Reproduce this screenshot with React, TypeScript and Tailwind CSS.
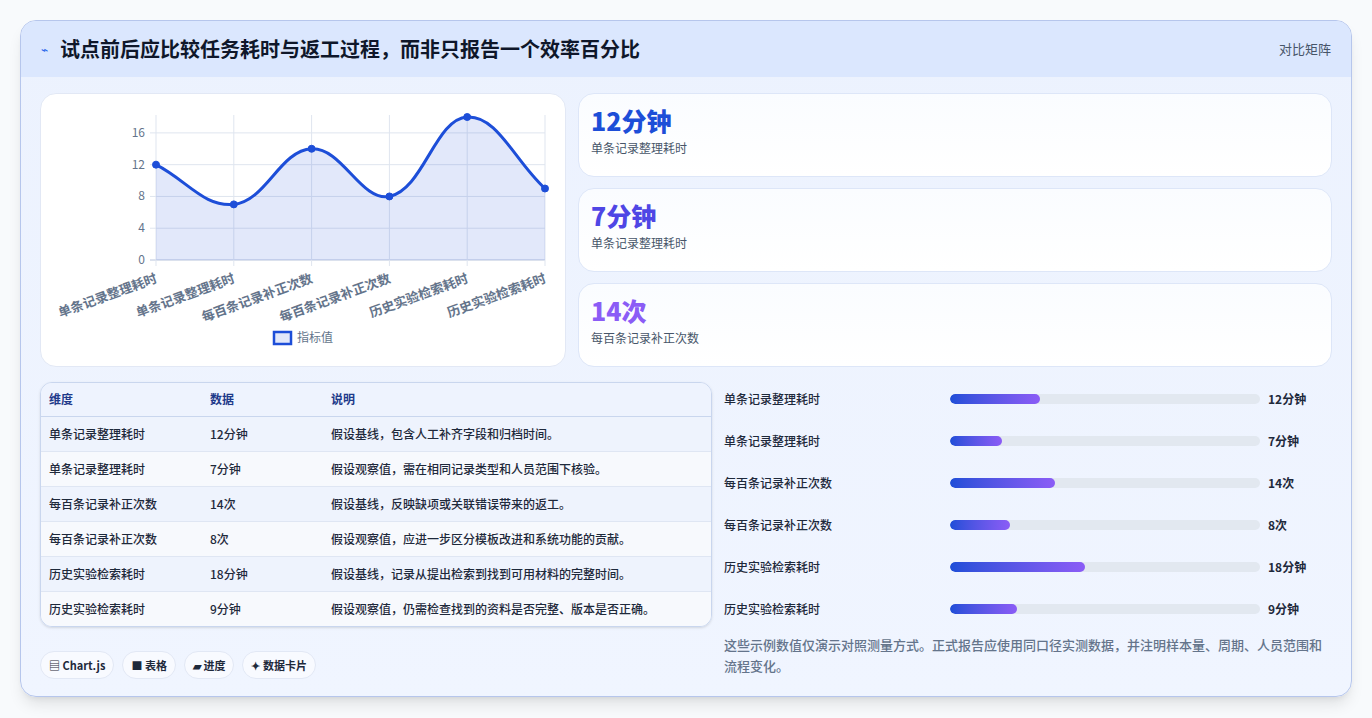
const labels = ['单条记录整理耗时', '单条记录整理耗时', '每百条记录补正次数', '每百条记录补正次数', '历史实验检索耗时', '历史实验检索耗时'];
const values = [12, 7, 14, 8, 18, 9];
const display = ['12分钟', '7分钟', '14次', '8次', '18分钟', '9分钟'];
const notes = [
  '假设基线，包含人工补齐字段和归档时间。',
  '假设观察值，需在相同记录类型和人员范围下核验。',
  '假设基线，反映缺项或关联错误带来的返工。',
  '假设观察值，应进一步区分模板改进和系统功能的贡献。',
  '假设基线，记录从提出检索到找到可用材料的完整时间。',
  '假设观察值，仍需检查找到的资料是否完整、版本是否正确。',
];

const font = { fontFamily: '"Noto Sans CJK SC", "Noto Sans", sans-serif' };

function LineChart() {
  const x0 = 115, x1 = 504, y0 = 166, yTop = 23;
  const sy = (v: number) => y0 - (v / 18) * (y0 - yTop);
  const pts = values.map((v, i) => ({ x: x0 + (i * (x1 - x0)) / 5, y: sy(v) }));
  const t = 0.4;
  const cps = pts.map((p, i) => {
    const prev = pts[i - 1] || p;
    const next = pts[i + 1] || p;
    const d01 = Math.hypot(p.x - prev.x, p.y - prev.y);
    const d12 = Math.hypot(next.x - p.x, next.y - p.y);
    const s = d01 + d12 || 1;
    const fa = (t * d01) / s, fb = (t * d12) / s;
    return {
      px: p.x - fa * (next.x - prev.x), py: p.y - fa * (next.y - prev.y),
      nx: p.x + fb * (next.x - prev.x), ny: p.y + fb * (next.y - prev.y),
    };
  });
  let d = `M${pts[0].x},${pts[0].y}`;
  for (let i = 1; i < pts.length; i++) {
    d += ` C${cps[i - 1].nx},${cps[i - 1].ny} ${cps[i].px},${cps[i].py} ${pts[i].x},${pts[i].y}`;
  }
  const area = `${d} L${x1},${y0} L${x0},${y0} Z`;
  return (
    <svg width="525" height="273" viewBox="0 0 525 273" style={font}>
      {[0, 4, 8, 12, 16].map((v) => (
        <g key={v}>
          <line x1={x0 - 6} x2={x1} y1={sy(v)} y2={sy(v)} stroke={v === 0 ? '#b8c4dc' : '#dfe5ef'} />
          <text x={x0 - 11} y={sy(v) + 4} textAnchor="end" fontSize="12" fill="#64748b">{v}</text>
        </g>
      ))}
      {pts.map((p, i) => (
        <line key={i} x1={p.x} x2={p.x} y1={yTop - 2} y2={y0 + 6} stroke="#dfe5ef" />
      ))}
      <path d={area} fill="rgba(29,78,216,0.13)" />
      <path d={d} fill="none" stroke="#1d4ed8" strokeWidth="3" />
      {pts.map((p, i) => (
        <circle key={i} cx={p.x} cy={p.y} r="3.5" fill="#1d4ed8" stroke="#1d4ed8" />
      ))}
      {pts.map((p, i) => (
        <text key={i} x={p.x + 2} y={y0 + 22} textAnchor="end" fontSize="13" fontWeight="600" fill="#64748b" transform={`rotate(-20 ${p.x + 2} ${y0 + 22})`}>
          {labels[i]}
        </text>
      ))}
      <rect x="233" y="238" width="17" height="12" fill="rgba(29,78,216,0.13)" stroke="#1d4ed8" strokeWidth="2.5" />
      <text x="256" y="248" fontSize="12" fill="#64748b">指标值</text>
    </svg>
  );
}

const stats = [
  { v: '12分钟', l: '单条记录整理耗时', c: 'text-[#1d4ed8]' },
  { v: '7分钟', l: '单条记录整理耗时', c: 'text-[#4f46e5]' },
  { v: '14次', l: '每百条记录补正次数', c: 'text-[#8b5cf6]' },
];

export default function App() {
  return (
    <div className="min-h-screen bg-[#f8fafc] pt-5 px-5" style={font}>
      <div className="rounded-2xl border border-[#b6c6ec] bg-gradient-to-b from-[#ecf2fe] to-[#f0f5ff] overflow-hidden shadow-lg h-[677px]">
        <div className="h-14 bg-[#dbe7fe] flex items-center justify-between px-5">
          <div className="flex items-center gap-3">
            <span className="text-[#2563eb] text-xs">⌁</span>
            <span className="text-[20px] font-bold text-[#0f172a]">试点前后应比较任务耗时与返工过程，而非只报告一个效率百分比</span>
          </div>
          <span className="text-[13px] text-[#475569]">对比矩阵</span>
        </div>
        <div className="px-[19px] pt-4">
          <div className="flex gap-[12px]">
            <div className="w-[526px] h-[274px] bg-white rounded-2xl border border-[#e2e8f5]">
              <LineChart />
            </div>
            <div className="flex-1 flex flex-col gap-[11px]">
              {stats.map((s, i) => (
                <div key={i} className="h-[84px] bg-gradient-to-b from-[#fafcff] to-white rounded-2xl border border-[#dde6f8] px-3 pt-2.5">
                  <div className={`text-[25px] font-black leading-8 ${s.c}`}>{s.v}</div>
                  <div className="text-xs text-[#475569] mt-1">{s.l}</div>
                </div>
              ))}
            </div>
          </div>
          <div className="flex gap-3 mt-[15px]">
            <div className="w-[672px]">
              <div className="rounded-xl border border-[#c9d6ee] overflow-hidden shadow-sm">
                <table className="w-full text-xs">
                  <thead>
                    <tr className="h-[33px] bg-[#eef3fe] border-b border-[#c9d6ee] text-[#1e3a8a] font-semibold text-left">
                      <th className="pl-2 w-[169px] font-semibold">维度</th>
                      <th className="w-[121px] font-semibold">数据</th>
                      <th className="font-semibold">说明</th>
                    </tr>
                  </thead>
                  <tbody className="text-[#1e293b] font-medium">
                    {labels.map((l, i) => (
                      <tr key={i} className={`h-[35px] ${i < 5 ? 'border-b border-[#dfe6f3]' : ''} ${i % 2 === 0 ? 'bg-[#eef3fd]' : 'bg-[#f7f9fd]'}`}>
                        <td className="pl-2">{l}</td>
                        <td>{display[i]}</td>
                        <td>{notes[i]}</td>
                      </tr>
                    ))}
                  </tbody>
                </table>
              </div>
              <div className="flex gap-2 mt-6">
                {['▤ Chart.js', '■ 表格', '▰ 进度', '✦ 数据卡片'].map((p) => (
                  <span key={p} className="h-[28px] px-2 rounded-full bg-[#f8faff] border border-[#e2e8f5] text-[11px] font-semibold text-[#1e293b] flex items-center">{p}</span>
                ))}
              </div>
            </div>
            <div className="flex-1 -mt-1">
              <div className="flex flex-col">
                {labels.map((l, i) => (
                  <div key={i} className="h-[42px] flex items-center">
                    <span className="w-[226px] text-xs font-medium text-[#1e293b]">{l}</span>
                    <div className="w-[310px] h-[10px] rounded-full bg-[#e2e8f0] overflow-hidden">
                      <div className="h-full rounded-full bg-gradient-to-r from-[#1d4ed8] to-[#8b5cf6]" style={{ width: `${(values[i] / 18) * 43.5}%` }} />
                    </div>
                    <span className="ml-2 text-xs font-bold text-[#1e293b]">{display[i]}</span>
                  </div>
                ))}
              </div>
              <p className="mt-1 text-[13px] leading-[21px] font-medium text-[#64748b] pr-1">
                这些示例数值仅演示对照测量方式。正式报告应使用同口径实测数据，并注明样本量、周期、人员范围和流程变化。
              </p>
            </div>
          </div>
        </div>
      </div>
    </div>
  );
}
